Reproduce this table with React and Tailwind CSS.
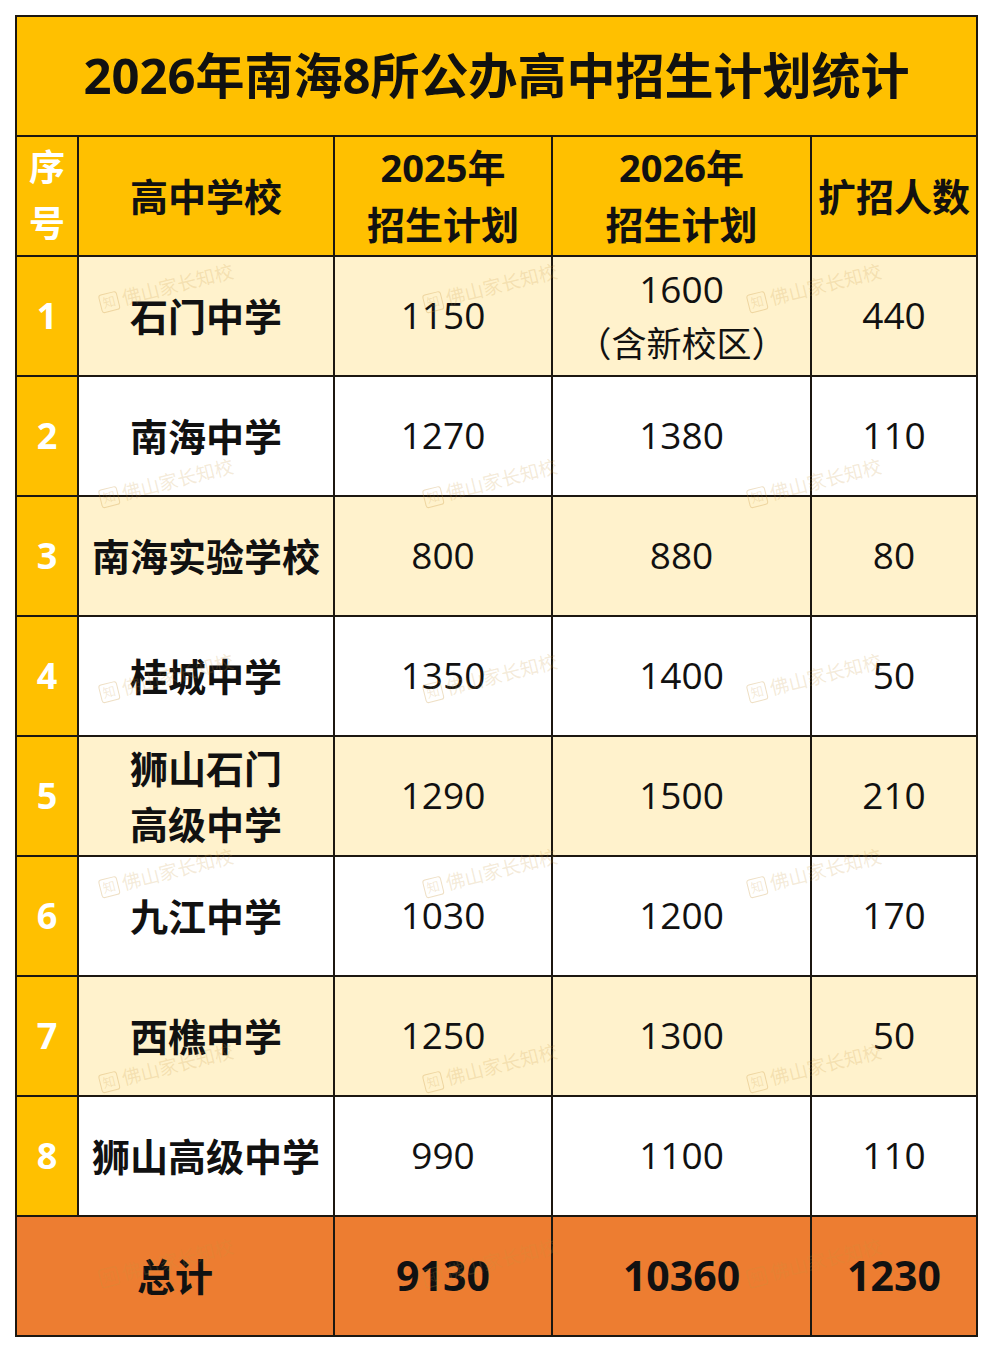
import React from 'react';

const rows = [
    { no: 1, name: ['石门中学'], y25: '1150', y26: ['1600', '（含新校区）'], add: '440', tint: true },
    { no: 2, name: ['南海中学'], y25: '1270', y26: ['1380'], add: '110' },
    { no: 3, name: ['南海实验学校'], y25: '800', y26: ['880'], add: '80', tint: true },
    { no: 4, name: ['桂城中学'], y25: '1350', y26: ['1400'], add: '50' },
    { no: 5, name: ['狮山石门', '高级中学'], y25: '1290', y26: ['1500'], add: '210', tint: true },
    { no: 6, name: ['九江中学'], y25: '1030', y26: ['1200'], add: '170' },
    { no: 7, name: ['西樵中学'], y25: '1250', y26: ['1300'], add: '50', tint: true },
    { no: 8, name: ['狮山高级中学'], y25: '990', y26: ['1100'], add: '110' },
];

const marks = [];
[290, 485, 680, 875, 1070, 1265].forEach((y) => {
    [100, 424, 748].forEach((x) => marks.push({ x, y }));
});

const Watermark = ({ x, y }) => (
    <div
        className="absolute flex items-center gap-1 text-[19px] text-[#c8963c]/20 -rotate-[14deg] origin-left whitespace-nowrap"
        style={{ left: x, top: y }}
    >
        <span className="border border-[#c8963c]/30 rounded-[3px] text-[13px] leading-none px-[2px] py-[2px]">知</span>
        <span>佛山家长知校</span>
    </div>
);

const App = () => {
    const cell = 'flex flex-col items-center justify-center text-center';
    return (
        <div className="relative min-h-screen bg-white pt-[15px] pl-[15px] font-['Open_Sans','Noto_Sans_CJK_SC',sans-serif] text-[#111]">
            <div className="grid w-[963px] grid-cols-[60px_254px_216px_257px_164px] auto-rows-[118px] gap-[2px] bg-[#1c1710] p-[2px]">
                <div className={`${cell} col-span-5 bg-[#ffc000] text-[49px] font-bold`}>
                    2026年南海8所公办高中招生计划统计
                </div>

                <div className={`${cell} bg-[#ffc000] text-white text-[36px] font-bold leading-[56px]`}>
                    <span>序</span>
                    <span>号</span>
                </div>
                <div className={`${cell} bg-[#ffc000] text-[38px] font-bold`}>高中学校</div>
                <div className={`${cell} bg-[#ffc000] text-[38px] font-bold leading-[57px]`}>
                    <span>2025年</span>
                    <span>招生计划</span>
                </div>
                <div className={`${cell} bg-[#ffc000] text-[38px] font-bold leading-[57px]`}>
                    <span>2026年</span>
                    <span>招生计划</span>
                </div>
                <div className={`${cell} bg-[#ffc000] text-[38px] font-bold`}>扩招人数</div>

                {rows.map((r) => {
                    const bg = r.tint ? 'bg-[#fff2cc]' : 'bg-white';
                    return (
                        <React.Fragment key={r.no}>
                            <div className={`${cell} bg-[#ffc000] text-white text-[36px] font-bold`}>{r.no}</div>
                            <div className={`${cell} ${bg} text-[38px] font-bold leading-[56px]`}>
                                {r.name.map((n) => (
                                    <span key={n}>{n}</span>
                                ))}
                            </div>
                            <div className={`${cell} ${bg} text-[37px] pb-[3px]`}>{r.y25}</div>
                            <div className={`${cell} ${bg} text-[37px] leading-[55px] ${r.y26.length === 1 ? 'pb-[3px]' : ''}`}>
                                {r.y26.map((n) => (
                                    <span key={n} className={n.length > 4 ? 'text-[35px]' : ''}>{n}</span>
                                ))}
                            </div>
                            <div className={`${cell} ${bg} text-[37px] pb-[3px]`}>{r.add}</div>
                        </React.Fragment>
                    );
                })}

                <div className={`${cell} col-span-2 bg-[#ed7d31] text-[38px] font-bold`}>总计</div>
                <div className={`${cell} bg-[#ed7d31] text-[41px] font-bold`}>9130</div>
                <div className={`${cell} bg-[#ed7d31] text-[41px] font-bold`}>10360</div>
                <div className={`${cell} bg-[#ed7d31] text-[41px] font-bold`}>1230</div>
            </div>

            <div className="pointer-events-none absolute inset-0">
                {marks.map((m) => (
                    <Watermark key={`${m.x}-${m.y}`} x={m.x} y={m.y} />
                ))}
            </div>
        </div>
    );
};

export default App;
